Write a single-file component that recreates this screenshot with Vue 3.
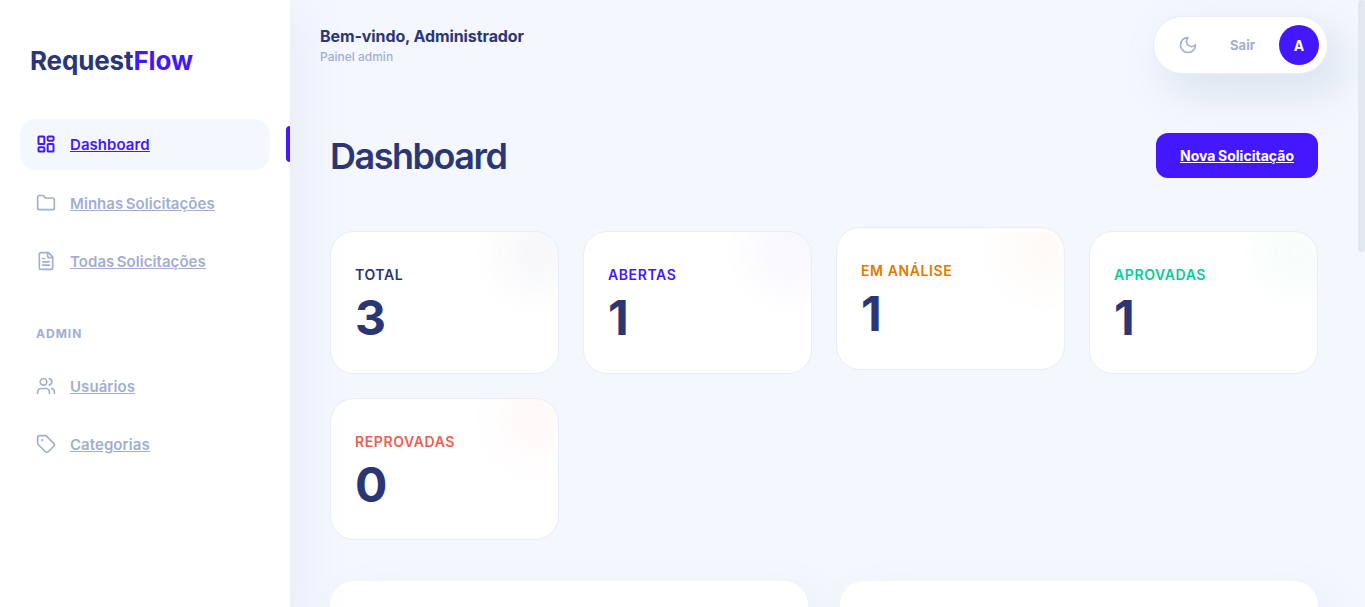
<template>
  <div class="app">
    <aside class="sidebar">
      <div class="logo">Request<span>Flow</span></div>
      <nav class="nav">
        <a v-for="item in mainNav" :key="item.label" href="#" class="nav-item" :class="{ active: item.active }">
          <svg class="nav-icon" viewBox="0 0 24 24" v-html="item.icon"></svg>
          <span class="nav-text">{{ item.label }}</span>
        </a>
        <div class="nav-title">ADMIN</div>
        <a v-for="item in adminNav" :key="item.label" href="#" class="nav-item">
          <svg class="nav-icon" viewBox="0 0 24 24" v-html="item.icon"></svg>
          <span class="nav-text">{{ item.label }}</span>
        </a>
      </nav>
    </aside>

    <main class="main">
      <header class="topbar">
        <div>
          <div class="welcome">Bem-vindo, Administrador</div>
          <div class="role">Painel admin</div>
        </div>
        <div class="user-pill">
          <button class="theme-btn">
            <svg viewBox="0 0 24 24"><path d="M12 3a6 6 0 0 0 9 9 9 9 0 1 1-9-9Z" /></svg>
          </button>
          <button class="logout-btn">Sair</button>
          <div class="avatar">A</div>
        </div>
      </header>

      <section class="content">
        <div class="page-head">
          <h1>Dashboard</h1>
          <a href="#" class="primary-btn">Nova Solicitação</a>
        </div>

        <div class="stats">
          <div
            v-for="stat in stats"
            :key="stat.label"
            class="stat-card"
            :class="{ lifted: stat.lifted }"
            :style="{ '--accent': stat.color }"
          >
            <div class="stat-label">{{ stat.label }}</div>
            <div class="stat-value">{{ stat.value }}</div>
          </div>
        </div>

        <div class="panels">
          <div class="panel"></div>
          <div class="panel"></div>
        </div>
      </section>
    </main>

    <div class="scroll-track"><div class="scroll-thumb"></div></div>
  </div>
</template>

<script setup>
const mainNav = [
  {
    label: 'Dashboard',
    active: true,
    icon: '<rect width="7" height="9" x="3" y="3" rx="1"/><rect width="7" height="5" x="14" y="3" rx="1"/><rect width="7" height="9" x="14" y="12" rx="1"/><rect width="7" height="5" x="3" y="16" rx="1"/>'
  },
  {
    label: 'Minhas Solicitações',
    icon: '<path d="M20 20a2 2 0 0 0 2-2V8a2 2 0 0 0-2-2h-7.9a2 2 0 0 1-1.69-.9L9.6 3.9A2 2 0 0 0 7.93 3H4a2 2 0 0 0-2 2v13a2 2 0 0 0 2 2Z"/>'
  },
  {
    label: 'Todas Solicitações',
    icon: '<path d="M15 2H6a2 2 0 0 0-2 2v16a2 2 0 0 0 2 2h12a2 2 0 0 0 2-2V7Z"/><path d="M14 2v4a2 2 0 0 0 2 2h4"/><path d="M10 9H8"/><path d="M16 13H8"/><path d="M16 17H8"/>'
  }
]

const adminNav = [
  {
    label: 'Usuários',
    icon: '<path d="M16 21v-2a4 4 0 0 0-4-4H6a4 4 0 0 0-4 4v2"/><circle cx="9" cy="7" r="4"/><path d="M22 21v-2a4 4 0 0 0-3-3.87"/><path d="M16 3.13a4 4 0 0 1 0 7.75"/>'
  },
  {
    label: 'Categorias',
    icon: '<path d="M12.586 2.586A2 2 0 0 0 11.172 2H4a2 2 0 0 0-2 2v7.172a2 2 0 0 0 .586 1.414l8.704 8.704a2.426 2.426 0 0 0 3.42 0l6.58-6.58a2.426 2.426 0 0 0 0-3.42z"/><circle cx="7.5" cy="7.5" r=".5"/>'
  }
]

const stats = [
  { label: 'Total', value: 3, color: '#2b3674' },
  { label: 'Abertas', value: 1, color: '#4318ff' },
  { label: 'Em análise', value: 1, color: '#e07a00', lifted: true },
  { label: 'Aprovadas', value: 1, color: '#05cd99' },
  { label: 'Reprovadas', value: 0, color: '#ee5d50' }
]
</script>

<style>
body {
  margin: 0;
}
</style>

<style scoped>
.app {
  display: flex;
  height: 100vh;
  background: #f4f7fe;
  color: #2b3674;
  font-family: Inter, "Liberation Sans", sans-serif;
  overflow: hidden;
}

.sidebar {
  position: relative;
  z-index: 2;
  flex: 0 0 290px;
  box-sizing: border-box;
  padding: 40px 20px;
  background: #fff;
  box-shadow: 14px 17px 40px 4px rgba(112, 144, 176, 0.08);
}

.logo {
  margin: 0 10px 37px;
  font-size: 26px;
  font-weight: 700;
  line-height: 42px;
  letter-spacing: -0.14px;
}

.logo span {
  color: #4318ff;
}

.nav {
  display: flex;
  flex-direction: column;
  gap: 8px;
}

.nav-item {
  position: relative;
  display: flex;
  align-items: center;
  gap: 14px;
  padding: 14px 16px;
  border-radius: 16px;
  color: #a3aed0;
  font-size: 15px;
  font-weight: 600;
  line-height: 22.5px;
  letter-spacing: 0.06px;
  word-spacing: -1.5px;
}

.nav-text {
  margin: 1px 0 -1px;
  text-decoration: underline;
}

.nav-item.active {
  background: #f4f7fe;
  color: #4318ff;
}

.nav-item.active .nav-icon {
  stroke-width: 2.4;
}

.nav-item.active::after {
  content: '';
  position: absolute;
  top: 7px;
  right: -20px;
  width: 4px;
  height: 36px;
  border-radius: 4px 0 0 4px;
  background: #4318ff;
}

.nav-icon {
  flex: none;
  width: 20px;
  height: 20px;
  fill: none;
  stroke: currentColor;
  stroke-width: 2;
  stroke-linecap: round;
  stroke-linejoin: round;
}

.nav-title {
  margin: 30px 0 10px;
  padding-left: 16px;
  color: #a3aed0;
  font-size: 12px;
  font-weight: 700;
  line-height: 18px;
  letter-spacing: 1px;
}

.main {
  flex: 1;
  min-width: 0;
  overflow-y: auto;
}

.scroll-track {
  flex: 0 0 7px;
  background: #f4f7fe;
}

.scroll-thumb {
  height: 252px;
  border-radius: 4px;
  background: #e2e8f0;
}

.topbar {
  display: flex;
  align-items: center;
  justify-content: space-between;
  padding: 16px 30px;
}

.welcome {
  font-size: 16px;
  font-weight: 700;
  line-height: 24px;
  letter-spacing: -0.1px;
}

.role {
  color: #a3aed0;
  font-size: 12px;
  font-weight: 500;
  line-height: 18px;
}

.user-pill {
  display: flex;
  align-items: center;
  gap: 8px;
  padding: 8px 8px 8px 16px;
  border: 1px solid #e9edf7;
  border-radius: 30px;
  background: #fff;
  box-shadow: 14px 17px 40px 4px rgba(112, 144, 176, 0.18);
}

.theme-btn,
.logout-btn {
  border: 0;
  background: none;
  color: #a3aed0;
  font-family: inherit;
}

.theme-btn {
  display: flex;
  align-items: center;
  justify-content: center;
  width: 36px;
  height: 36px;
  padding: 0;
}

.theme-btn svg {
  width: 20px;
  height: 20px;
  fill: none;
  stroke: currentColor;
  stroke-width: 2;
  stroke-linecap: round;
  stroke-linejoin: round;
}

.logout-btn {
  padding: 0 16px;
  font-size: 13px;
  font-weight: 700;
}

.avatar {
  display: flex;
  align-items: center;
  justify-content: center;
  width: 40px;
  height: 40px;
  border-radius: 50%;
  background: #4318ff;
  color: #fff;
  font-size: 14px;
  font-weight: 700;
}

.content {
  padding: 40px;
}

.page-head {
  display: flex;
  align-items: center;
  justify-content: space-between;
  height: 51px;
  margin-bottom: 50px;
}

h1 {
  margin: 0;
  font-size: 36px;
  font-weight: 600;
  letter-spacing: -1.5px;
}

.primary-btn {
  display: flex;
  align-items: center;
  justify-content: center;
  width: 162px;
  height: 45px;
  border-radius: 12px;
  background: #4318ff;
  color: #fff;
  font-size: 14px;
  font-weight: 700;
  letter-spacing: 0.02px;
  word-spacing: -0.8px;
}

.stats {
  display: grid;
  grid-template-columns: repeat(4, 1fr);
  gap: 24px;
}

.stat-card {
  position: relative;
  overflow: hidden;
  padding: 32px 24px;
  border: 1px solid #e9edf7;
  border-radius: 24px;
  background: #fff;
}

.stat-card.lifted {
  transform: translateY(-4px);
}

.stat-card::before {
  content: '';
  position: absolute;
  top: -20px;
  right: -20px;
  width: 80px;
  height: 80px;
  border-radius: 50%;
  background: var(--accent);
  opacity: 0.035;
  filter: blur(20px);
}

.stat-label {
  color: var(--accent);
  font-size: 14px;
  font-weight: 600;
  line-height: 21px;
  letter-spacing: 0.6px;
  text-transform: uppercase;
}

.stat-value {
  margin-top: 11px;
  font-size: 48px;
  font-weight: 700;
  line-height: 44.6px;
}

.panels {
  display: grid;
  grid-template-columns: repeat(2, 1fr);
  gap: 32px;
  margin-top: 41px;
}

.panel {
  height: 841px;
  border-radius: 24px;
  background: #fff;
  box-shadow: 14px 17px 40px 4px rgba(112, 144, 176, 0.08);
}
</style>
